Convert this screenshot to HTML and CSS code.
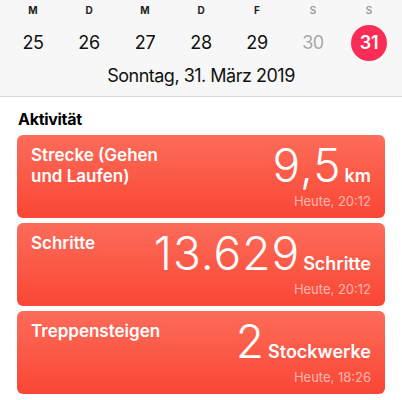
FILE: index.html
```html
<!DOCTYPE html>
<html lang="de">
<head>
    <meta charset="UTF-8">
    <meta name="viewport" content="width=device-width, initial-scale=1.0">
    <title>Aktivität</title>
    <link rel="stylesheet" href="styles.css">
</head>
<body>
    <!-- Week header -->
    <div class="week-header">
        <div class="week-row days">
            <span>M</span>
            <span>D</span>
            <span>M</span>
            <span>D</span>
            <span>F</span>
            <span class="weekend">S</span>
            <span class="weekend">S</span>
        </div>
        <div class="week-row dates">
            <span class="date">25</span>
            <span class="date">26</span>
            <span class="date">27</span>
            <span class="date">28</span>
            <span class="date">29</span>
            <span class="date muted">30</span>
            <span class="date today">31</span>
        </div>
        <div class="current-day">Sonntag, 31. März 2019</div>
    </div>

    <!-- Activity list -->
    <div class="section">
        <h2 class="section-title">Aktivität</h2>

        <div class="card">
            <div class="card-top">
                <div class="card-title">Strecke (Gehen<br>und Laufen)</div>
                <div class="card-value"><span class="num">9,5</span><span class="unit">km</span></div>
            </div>
            <div class="card-time">Heute, 20:12</div>
        </div>

        <div class="card">
            <div class="card-top">
                <div class="card-title">Schritte</div>
                <div class="card-value"><span class="num">13.629</span><span class="unit">Schritte</span></div>
            </div>
            <div class="card-time">Heute, 20:12</div>
        </div>

        <div class="card">
            <div class="card-top">
                <div class="card-title">Treppensteigen</div>
                <div class="card-value"><span class="num">2</span><span class="unit">Stockwerke</span></div>
            </div>
            <div class="card-time">Heute, 18:26</div>
        </div>
    </div>
</body>
</html>
```

FILE: styles.css
```css
body {
    font-family: Inter, "Noto Sans", sans-serif;
    background-color: #fff;
    color: #000;
    margin: 0;
    padding: 0;
}
.week-header {
    background-color: #f7f7f7;
    border-bottom: 1px solid #d6d6d6;
    padding: 3px 5px 9px;
}
.week-row {
    display: grid;
    grid-template-columns: repeat(7, 1fr);
    text-align: center;
}
.days {
    font-size: 10px;
    font-weight: 700;
    line-height: 14px;
    color: #222;
}
.days .weekend {
    color: #9a9a9a;
    font-weight: 600;
}
.dates {
    margin-top: 8px;
    justify-items: center;
}
.date {
    width: 36px;
    height: 36px;
    line-height: 36px;
    font-size: 18px;
    letter-spacing: -0.4px;
    color: #111;
    border-radius: 50%;
}
.date.muted {
    color: #a8a8a8;
}
.date.today {
    background-color: #fb2c55;
    color: #fff;
    font-weight: 600;
}
.current-day {
    margin-top: 4px;
    text-align: center;
    font-size: 18px;
    line-height: 22px;
    letter-spacing: -0.5px;
    color: #111;
}
.section {
    padding: 0 17px;
}
.section-title {
    margin: 12px 1px 6px;
    font-size: 16px;
    line-height: 20px;
    font-weight: 700;
    letter-spacing: -0.3px;
}
.card {
    display: flex;
    flex-direction: column;
    box-sizing: border-box;
    height: 83px;
    margin-bottom: 5px;
    padding: 10px 14px 9px;
    border-radius: 6px;
    background: linear-gradient(#fd6c5a, #fa4634);
    color: #fff;
}
.card-top {
    display: flex;
    justify-content: space-between;
    align-items: flex-start;
}
.card-title {
    font-size: 17px;
    line-height: 21px;
    font-weight: 600;
}
.card-value {
    display: flex;
    align-items: baseline;
    gap: 3px;
}
.num {
    font-size: 46px;
    line-height: 40px;
    font-weight: 300;
    letter-spacing: 1px;
}
.unit {
    font-size: 18px;
    font-weight: 600;
}
.card-time {
    margin-top: auto;
    text-align: right;
    font-size: 13px;
    line-height: 16px;
    color: rgba(255, 255, 255, 0.6);
}
```
